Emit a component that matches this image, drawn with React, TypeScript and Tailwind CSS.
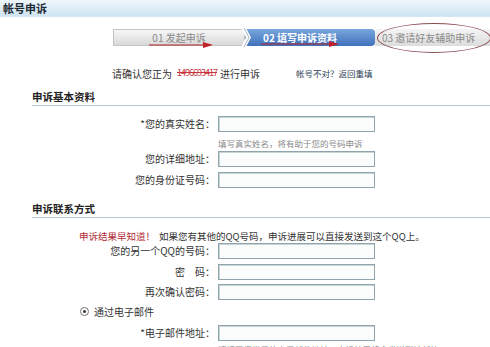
import React from "react";

const font = { fontFamily: '"Noto Sans CJK SC", "Noto Sans", sans-serif' };

function Row({ label, mt }: { label: string; mt: string }) {
  return (
    <div className={`flex items-center ${mt}`}>
      <div className="w-[215px] text-right text-[10px] leading-[16px] text-[#333]">{label}</div>
      <div className="ml-[3px] h-[16px] w-[157px] border border-[#8fa5ab] bg-[#fbfdfd] shadow-[inset_1px_1px_0_#c8d4d6]" />
    </div>
  );
}

function RedArrow({ w }: { w: number }) {
  return (
    <svg width={w + 8} height="6" viewBox={`0 0 ${w + 8} 6`} className="block">
      <line x1="0" y1="3" x2={w} y2="3" stroke="#b0202a" strokeWidth="1.2" />
      <polygon points={`${w - 2},0 ${w + 8},3 ${w - 2},6`} fill="#c0202a" />
    </svg>
  );
}

export default function App() {
  return (
    <div className="relative h-[347px] w-[490px] overflow-hidden bg-white" style={font}>
      <div className="flex h-[17px] items-center border-b border-[#d4e6f3] bg-gradient-to-b from-[#eef6fc] to-[#cfe4f4] pl-[3px] text-[11px] font-bold text-[#1d2a33]">
        帐号申诉
      </div>

      <div className="relative ml-[113px] mt-[12px] flex h-[17px] w-[377px]">
        <div className="relative flex w-[132px] items-center justify-center border border-[#c4c4c4] bg-gradient-to-b from-[#f7f7f7] to-[#d9d9d9] text-[10px] text-[#8a8a8a]">
          <span>01 发起申诉</span>
          <div className="absolute left-[35px] top-[12px]">
            <RedArrow w={56} />
          </div>
        </div>
        <div className="relative flex w-[130px] items-center rounded-r-[4px] bg-gradient-to-b from-[#7aa6dc] to-[#3f72bb] pl-[18px] text-[10px] font-bold text-white">
          <span>02 填写申诉资料</span>
          <div className="absolute left-[16px] top-[12px]">
            <RedArrow w={70} />
          </div>
        </div>
        <div className="flex flex-1 items-center bg-gradient-to-b from-[#f4f4f4] to-[#dcdcdc] pl-[7px] text-[10px] text-[#8a8a8a]">
          03 邀请好友辅助申诉
        </div>
        <svg className="absolute left-[128px] top-[-1px]" width="10" height="19" viewBox="0 0 10 19">
          <polygon points="0,0 5,0 10,9.5 5,19 0,19 5,9.5" fill="#ffffff" />
          <polyline points="3,0 8,9.5 3,19" fill="none" stroke="#aab6c4" strokeWidth="1" />
        </svg>
        <div className="absolute left-[264px] top-[-6px] h-[30px] w-[114px] rounded-[50%] border border-[#8a4a52]" />
      </div>

      <div className="ml-[112px] mt-[20px] flex h-[14px] items-center text-[10px] text-[#333]">
        <span>请确认您正为</span>
        <span className="ml-[5px] text-[9px] tracking-[-1px] text-[#c8323c] line-through">1496693417</span>
        <span className="ml-[3px]">进行申诉</span>
        <span className="ml-[36px] text-[8.5px] text-[#2c3d55]">帐号不对？返回重填</span>
      </div>

      <div className="ml-[32px] mt-[9px] flex h-[17px] items-center border-b border-[#b5c9cf] text-[10.5px] font-bold text-[#222]">
        申诉基本资料
      </div>

      <Row label="*您的真实姓名：" mt="mt-[10px]" />
      <div className="ml-[218px] mt-[5px] h-[12px] text-[8.5px] leading-[12px] text-[#8a8a8a]">
        填写真实姓名，将有助于您的号码申诉
      </div>
      <Row label="您的详细地址：" mt="mt-[2px]" />
      <Row label="您的身份证号码：" mt="mt-[5px]" />

      <div className="ml-[32px] mt-[13px] flex h-[17px] items-center border-b border-[#b5c9cf] text-[10.5px] font-bold text-[#222]">
        申诉联系方式
      </div>

      <div className="ml-[79px] mt-[11px] flex h-[14px] items-center text-[9.5px] text-[#333]">
        <span className="text-[#b02a32]">申诉结果早知道！</span>
        <span className="ml-[4px]">如果您有其他的QQ号码，申诉进展可以直接发送到这个QQ上。</span>
      </div>
      <Row label="您的另一个QQ的号码：" mt="mt-0" />
      <Row label="密　码：" mt="mt-[5px]" />
      <Row label="再次确认密码：" mt="mt-[4px]" />

      <div className="ml-[80px] mt-[4px] flex h-[14px] items-center text-[10px] text-[#333]">
        <span className="flex h-[9px] w-[9px] items-center justify-center rounded-full border border-[#777] bg-white">
          <span className="h-[3px] w-[3px] rounded-full bg-[#333]" />
        </span>
        <span className="ml-[5px]">通过电子邮件</span>
      </div>

      <Row label="*电子邮件地址：" mt="mt-[7px]" />
      <div className="ml-[218px] mt-[2px] h-[12px] text-[8.5px] leading-[12px] text-[#8a8a8a]">
        请填写您常用的电子邮件地址，申诉结果将会发送到该邮箱
      </div>
    </div>
  );
}
